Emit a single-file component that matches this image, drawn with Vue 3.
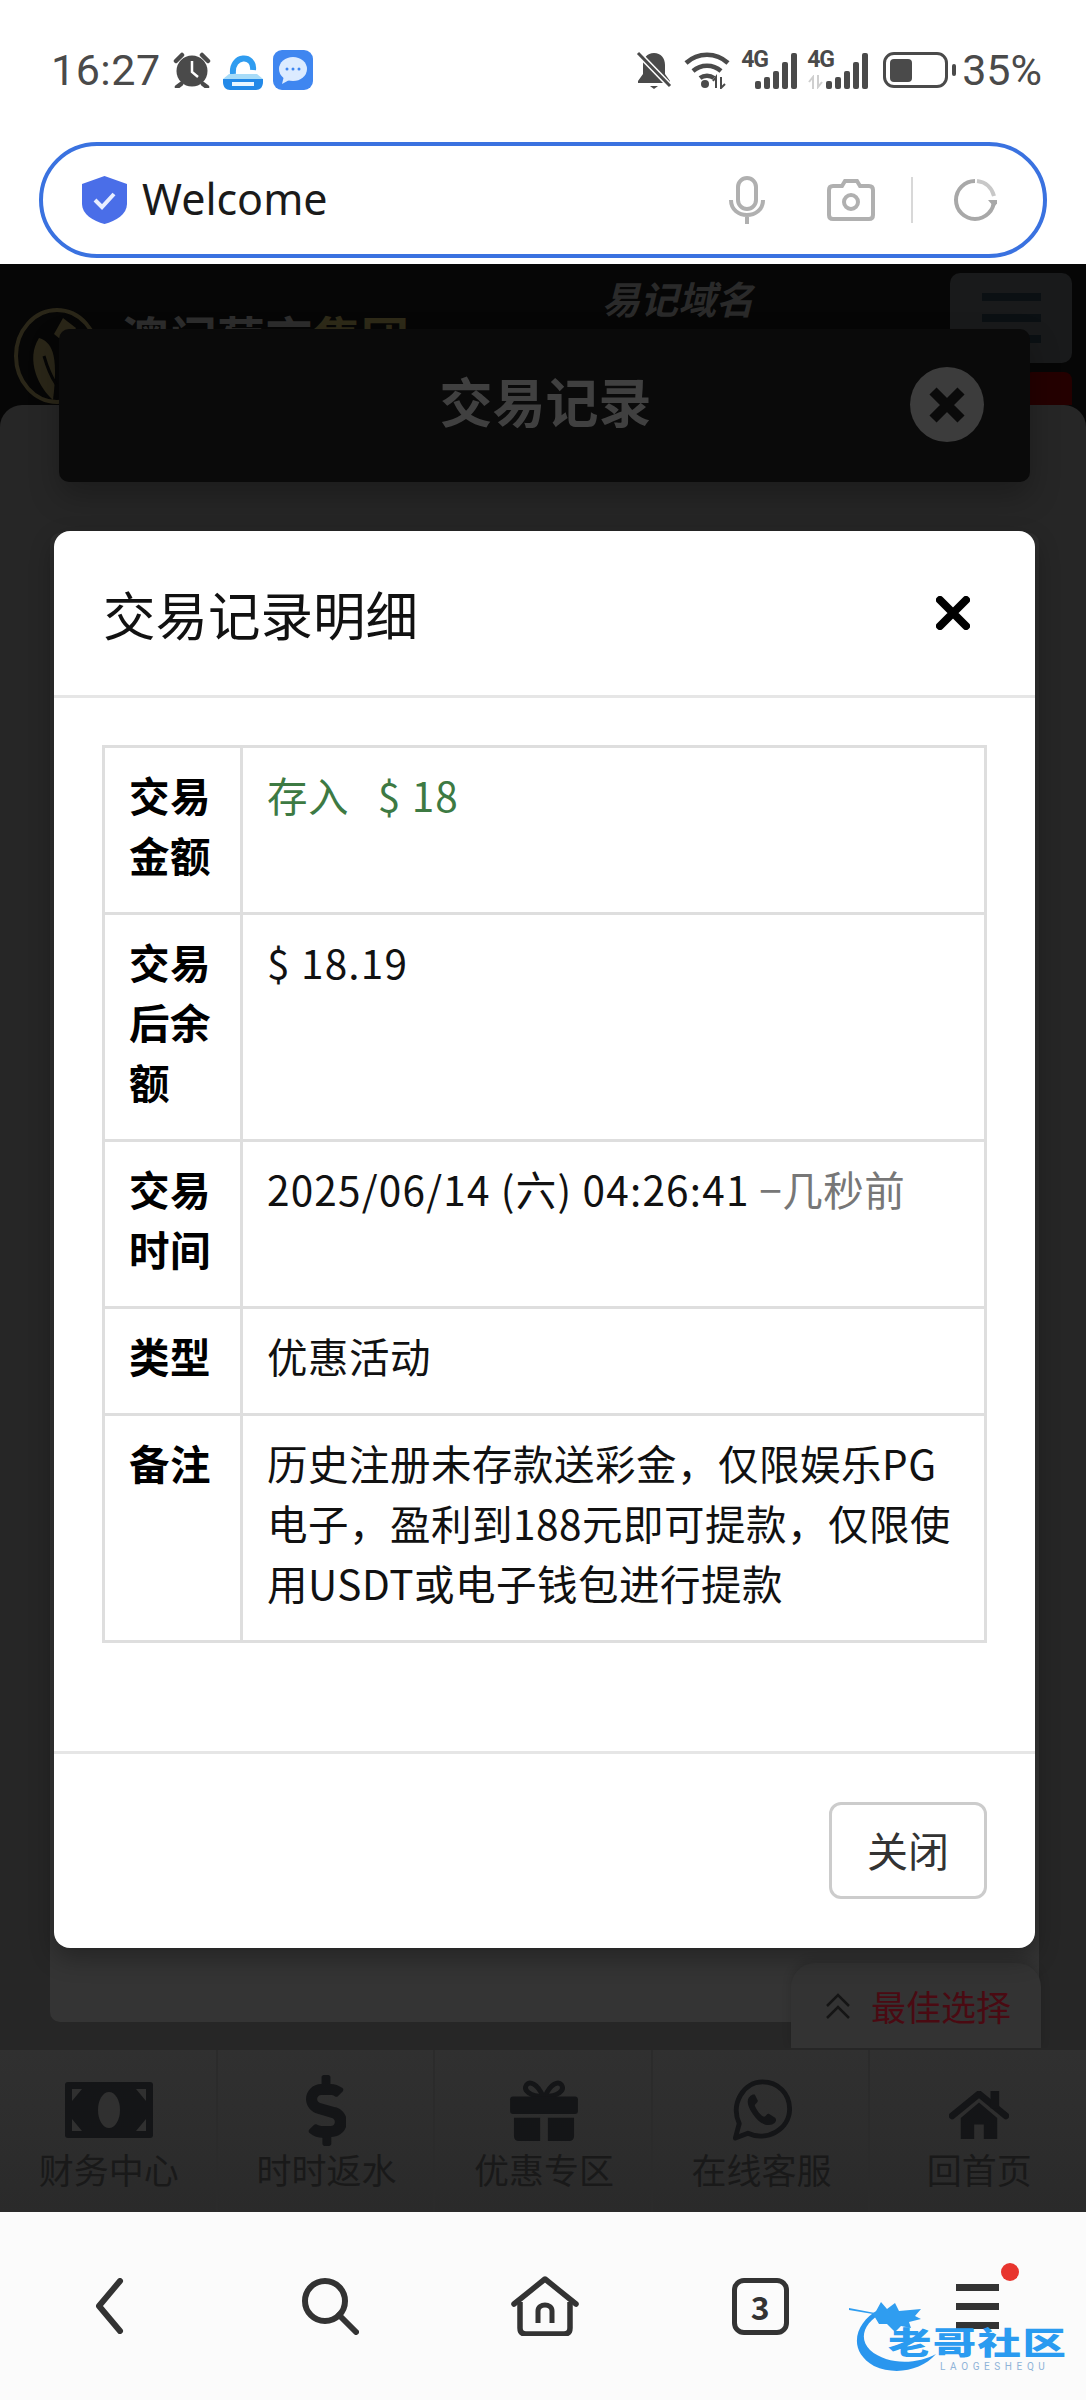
<script setup>
const navItems = [
  { label: '财务中心', icon: 'cash' },
  { label: '时时返水', icon: 'dollar' },
  { label: '优惠专区', icon: 'gift' },
  { label: '在线客服', icon: 'chat' },
  { label: '回首页', icon: 'home' }
]
const signalBars = [8, 12, 18, 27, 36]
</script>

<template>
  <div class="phone">
    <div class="status-bar">
      <span class="time">16:27</span>
      <svg class="st-alarm" viewBox="0 0 38 36" width="38" height="36">
        <circle cx="19" cy="19" r="15.5" fill="#4a4a4a" />
        <path d="M19 9v11l6 5" fill="none" stroke="#fff" stroke-width="2.5" />
        <path d="M3 9 9 3M35 9l-6-6M8 32l-4 3M30 32l4 3" stroke="#4a4a4a" stroke-width="4.5" stroke-linecap="round" />
      </svg>
      <svg class="st-app" viewBox="0 0 40 40" width="40" height="40">
        <path d="M10 24C8 4 32 4 30 20" fill="none" stroke="#2f9cf0" stroke-width="6" />
        <path d="M6 24h28l6 5H0z" fill="#a8dcf8" />
        <path d="M0 29h40v3c0 5-3 8-7 8H7c-4 0-7-3-7-8z" fill="#2389e8" />
        <rect x="9" y="32" width="22" height="4" fill="#e8f5ff" />
      </svg>
      <svg class="st-chat" viewBox="0 0 40 40" width="40" height="40">
        <rect width="40" height="40" rx="9" fill="#3f86f0" />
        <ellipse cx="20" cy="19" rx="14" ry="12" fill="#dcebff" />
        <path d="M11 26l-2 8 9-5z" fill="#dcebff" />
        <circle cx="14" cy="19" r="1.5" fill="#3f86f0" />
        <circle cx="20" cy="19" r="1.5" fill="#3f86f0" />
        <circle cx="26" cy="19" r="1.5" fill="#3f86f0" />
      </svg>
      <div class="status-right">
        <svg viewBox="0 0 38 40" width="38" height="40">
          <path d="M19 3c-7 0-11 5-11 12v9l-5 7v2h32v-2l-5-7v-9c0-7-4-12-11-12z" fill="#4a4a4a" />
          <path d="M15 36h8l-4 3z" fill="#4a4a4a" />
          <path d="M3 3l32 33" stroke="#fff" stroke-width="6" />
          <path d="M3 3l32 33" stroke="#4a4a4a" stroke-width="3" />
        </svg>
        <svg class="st-wifi" viewBox="0 0 48 38" width="48" height="38">
          <path d="M3 12c12-11 30-11 42 0M10 20c8-7 20-7 28 0M17 27c4-3 10-3 14 0" fill="none" stroke="#4a4a4a" stroke-width="4.5" />
          <circle cx="22" cy="33" r="4" fill="#4a4a4a" />
          <path d="M33 37V26l-3 4M38 26v11l4-4" fill="none" stroke="#4a4a4a" stroke-width="2" />
        </svg>
        <div class="signal">
          <span class="g4">4G</span>
          <i v-for="h in signalBars" :key="h" :style="{ height: h + 'px' }"></i>
        </div>
        <div class="signal second">
          <span class="g4">4G</span>
          <svg class="arrows" viewBox="0 0 16 14" width="16" height="14">
            <path d="M5 14V2L1 7M10 0v12l4-5" fill="none" stroke="#cfcfcf" stroke-width="2" />
          </svg>
          <i v-for="h in signalBars" :key="h" :style="{ height: h + 'px' }"></i>
        </div>
        <div class="battery"><div class="level"></div></div>
        <span class="tip"></span>
        <span class="pct">35%</span>
      </div>
    </div>

    <div class="address-wrap">
      <div class="address">
        <svg viewBox="0 0 45 48" width="45" height="48">
          <path d="M22.5 0 45 8v20c0 10-11 17-22.5 20C11 45 0 38 0 28V8z" fill="#4a6ee8" />
          <path d="M13 24l7 7 12-13" fill="none" stroke="#e8eeff" stroke-width="4" />
        </svg>
        <span class="welcome">Welcome</span>
        <svg class="a-mic" viewBox="0 0 36 48" width="36" height="48">
          <rect x="9" y="2" width="18" height="31" rx="9" fill="none" stroke="#b0b0b0" stroke-width="4" />
          <path d="M2 24c0 20 32 20 32 0M18 38v10" fill="none" stroke="#b0b0b0" stroke-width="4" />
        </svg>
        <svg class="a-cam" viewBox="0 0 48 42" width="48" height="42">
          <path d="M15 7l3-5h12l3 5h9c3 0 4 2 4 4v25c0 3-2 4-4 4H6c-3 0-4-2-4-4V11c0-3 2-4 4-4z" fill="none" stroke="#b0b0b0" stroke-width="4" />
          <circle cx="24" cy="23" r="7" fill="none" stroke="#b0b0b0" stroke-width="4" />
        </svg>
        <span class="a-sep"></span>
        <svg class="a-ref" viewBox="0 0 44 44" width="44" height="44">
          <path d="M22 3a19 19 0 1 0 19 19" fill="none" stroke="#a8a8a8" stroke-width="4" />
          <path d="M24 3c9 1 15 7 17 15" fill="none" stroke="#c8c8c8" stroke-width="4" />
          <path d="M35 22h12l-6 7z" fill="#a8a8a8" />
        </svg>
      </div>
    </div>

    <div class="site">
      <header class="site-head">
        <div class="brand">
          <svg viewBox="0 0 88 96" width="88" height="96">
            <ellipse cx="44" cy="48" rx="41" ry="46" fill="none" stroke="#2a2618" stroke-width="4" />
            <path d="M50 10l13 10-10 16-12-10z" fill="#2a2618" />
            <path d="M26 30c12 4 20 14 14 62C26 80 12 52 26 30z" fill="#2a2618" />
            <path d="M31 48c4 14 8 22 12 28" fill="none" stroke="#060606" stroke-width="3" />
          </svg>
          <span class="brand-name">澳门葡京<em>集团</em></span>
        </div>
        <div class="slogan">易记域名</div>
        <div class="head-right">
          <div class="burger"><i></i><i></i><i></i></div>
          <div class="red-chip"></div>
        </div>
      </header>

      <main class="site-body">
        <div class="panel"></div>
        <div class="best-tab">
          <svg viewBox="0 0 26 26" width="26" height="26">
            <path d="M2 13 13 2l11 11M2 25 13 14l11 11" fill="none" stroke="#151515" stroke-width="2.5" />
          </svg>
          <span>最佳选择</span>
        </div>
      </main>

      <nav class="site-nav">
        <div v-for="item in navItems" :key="item.label" class="nav-item">
          <div class="nav-icon">
            <svg v-if="item.icon === 'cash'" viewBox="0 0 88 56" width="88" height="56">
              <rect width="88" height="56" rx="3" fill="#141517" />
              <ellipse cx="44" cy="28" rx="11" ry="18" fill="#303030" />
              <path d="M7 7h10L7 19zM81 7H71l10 12zM7 49h10L7 37zM81 49H71l10-12z" fill="#303030" />
            </svg>
            <svg v-else-if="item.icon === 'dollar'" viewBox="0 0 288 512" width="40" height="71">
              <path fill="#141517" d="M209.2 233.4l-108-31.6C88.7 198.2 80 186.5 80 173.5c0-16.3 13.2-29.5 29.5-29.5h66.3c12.2 0 24.2 3.7 34.2 10.5 6.1 4.1 14.3 3.1 19.5-2l34.8-34c7.1-6.9 6.1-18.4-1.8-24.5C238 74.8 207.4 64.1 176 64V16c0-8.8-7.2-16-16-16h-32c-8.8 0-16 7.2-16 16v48h-2.5C45.8 64-5.4 118.7.5 183.6c4.2 46.1 39.4 83.6 83.8 96.6l102.5 30c12.5 3.7 21.2 15.3 21.2 28.3 0 16.3-13.2 29.5-29.5 29.5h-66.3C100 368 88 364.3 78 357.5c-6.1-4.1-14.3-3.1-19.5 2l-34.8 34c-7.1 6.9-6.1 18.4 1.8 24.5 30.7 24 61.3 34.7 92.7 34.8V496c0 8.8 7.2 16 16 16h32c8.8 0 16-7.2 16-16v-48.2c46.6-.9 90.3-28.6 105.7-72.7 21.5-61.6-14.6-124.8-71.7-141.7z" />
            </svg>
            <svg v-else-if="item.icon === 'gift'" viewBox="0 0 70 64" width="70" height="62">
              <path d="M34 18C28 4 20 2 17 6c-4 6 4 12 17 12zM36 18C42 4 50 2 53 6c4 6-4 12-17 12z" fill="none" stroke="#141517" stroke-width="5" />
              <rect y="18" width="70" height="18" rx="3" fill="#141517" />
              <path d="M4 40h27v24H9c-3 0-5-2-5-5zM39 40h27v19c0 3-2 5-5 5H39z" fill="#141517" />
            </svg>
            <svg v-else-if="item.icon === 'chat'" viewBox="0 0 62 64" width="61" height="62">
              <path d="M4 61 8 46C-1 26 12 3 32 3c16 0 28 12 28 28 0 21-24 34-43 25z" fill="none" stroke="#141517" stroke-width="5" stroke-linejoin="round" />
              <path d="M22 16c-7 3-7 10 0 20 6 9 13 13 20 11 4-2 5-5 3-7l-6-4c-2-1-3 2-5 3-3 0-9-8-10-12 1-2 4-3 3-5l-3-6z" fill="#141517" />
            </svg>
            <svg v-else class="ic-home" viewBox="0 0 62 50" width="60" height="48">
              <path d="M3 26 31 3l28 23" fill="none" stroke="#141517" stroke-width="7" stroke-linecap="round" />
              <rect x="43" y="0" width="9" height="18" fill="#141517" />
              <path d="M12 28 31 12l19 16v22H36V35H26v15H12z" fill="#141517" />
            </svg>
          </div>
          <div class="nav-label">{{ item.label }}</div>
        </div>
      </nav>

      <!-- the two dialogs lying over the page -->
      <div class="records">
        <span class="records-title">交易记录</span>
        <span class="records-close">
          <svg viewBox="0 0 40 40" width="40" height="40">
            <path d="M6 6l28 28M34 6 6 34" stroke="#0a0a0a" stroke-width="10" />
          </svg>
        </span>
      </div>

      <div class="detail">
        <div class="detail-head">
          <h5>交易记录明细</h5>
          <svg viewBox="0 0 34 34" width="34" height="34">
            <path d="M4 4l26 26M30 4 4 30" stroke="#000" stroke-width="8" stroke-linecap="round" />
          </svg>
        </div>
        <div class="detail-body">
          <table>
            <colgroup>
              <col class="col-key" />
              <col />
            </colgroup>
            <tbody>
              <tr>
                <th>交易金额</th>
                <td class="green">存入&nbsp;&nbsp;&nbsp;<span class="num">$ 18</span></td>
              </tr>
              <tr>
                <th>交易后余额</th>
                <td><span class="num">$ 18.19</span></td>
              </tr>
              <tr>
                <th>交易时间</th>
                <td class="date-cell"><span class="num">2025/06/14 (六) 04:26:41</span> <span class="muted">−几秒前</span></td>
              </tr>
              <tr>
                <th>类型</th>
                <td>优惠活动</td>
              </tr>
              <tr>
                <th>备注</th>
                <td>历史注册未存款送彩金，仅限娱乐PG电子，盈利到188元即可提款，仅限使用USDT或电子钱包进行提款</td>
              </tr>
            </tbody>
          </table>
        </div>
        <div class="detail-foot">
          <button class="btn-close">关闭</button>
        </div>
      </div>
    </div>

    <div class="browser-bar">
      <svg viewBox="0 0 30 56" width="30" height="56">
        <path d="M26 3 5 28l21 25" fill="none" stroke="#333" stroke-width="6" stroke-linecap="round" stroke-linejoin="round" />
      </svg>
      <svg class="br-search" viewBox="0 0 58 58" width="58" height="58">
        <circle cx="24" cy="24" r="20" fill="none" stroke="#333" stroke-width="6" />
        <path d="M38 38l17 17" stroke="#333" stroke-width="6" stroke-linecap="round" />
      </svg>
      <svg class="br-home" viewBox="0 0 68 60" width="68" height="60">
        <path d="M3 28 34 3l31 25" fill="none" stroke="#333" stroke-width="5.5" stroke-linecap="round" stroke-linejoin="round" />
        <path d="M9 26v26c0 4 2 6 6 6h38c4 0 6-2 6-6V26" fill="none" stroke="#333" stroke-width="5.5" />
        <path d="M27 47V35c0-8 14-8 14 0v12" fill="none" stroke="#333" stroke-width="5" />
      </svg>
      <div class="tabs-count">3</div>
      <div class="menu-btn"><i></i><i></i><i></i><b></b></div>
    </div>

    <div class="watermark">
      <svg viewBox="0 0 90 74" width="90" height="74">
        <path d="M30 10C8 22-2 50 26 66c22 10 48 4 62-12-18 10-48 12-66-4C10 38 16 22 36 12z" fill="#2a96ee" />
        <path d="M1 8l26 5 6-11 6 7 8-6 4 8 22-2-6 7 6 3-12 3 2 6-10-2-6 6-8-8-8 0-6-10-24-4z" fill="#2f9df0" />
      </svg>
      <span class="wm-cn">老哥社区</span>
      <span class="wm-en">LAOGESHEQU</span>
    </div>
  </div>
</template>

<style scoped>
.phone {
  width: 1086px;
  height: 2400px;
  position: relative;
  overflow: hidden;
  background: #fff;
  font-family: "Noto Sans CJK SC", "Noto Sans", sans-serif;
}

.status-bar {
  height: 140px;
  display: flex;
  align-items: center;
  padding: 0 44px 0 51px;
  box-sizing: border-box;
  color: #4a4a4a;
}
.time {
  font-family: "Roboto", sans-serif;
  font-size: 43px;
  letter-spacing: 0.5px;
  width: 122px;
}
.st-app { margin-left: 12px; }
.st-chat { margin-left: 10px; }
.status-right {
  margin-left: auto;
  display: flex;
  align-items: center;
}
.st-wifi { margin-left: 10px; }
.signal {
  display: flex;
  align-items: flex-end;
  gap: 3px;
  height: 38px;
  margin-left: 10px;
  position: relative;
  width: 56px;
  justify-content: flex-end;
}
.signal.second { margin-left: 10px; width: 61px; }
.signal i { width: 6px; background: #4a4a4a; border-radius: 2px; display: block; }
.g4 {
  position: absolute;
  left: 0;
  top: -3px;
  font-family: "Roboto", sans-serif;
  font-weight: 700;
  font-size: 23px;
  line-height: 24px;
  letter-spacing: -1px;
  color: #4a4a4a;
}
.arrows {
  position: absolute;
  left: 1px;
  bottom: 0;
}
.battery {
  width: 65px;
  height: 36px;
  border: 3.5px solid #4a4a4a;
  border-radius: 11px;
  box-sizing: border-box;
  padding: 3.5px;
  margin-left: 15px;
}
.level { width: 22px; height: 100%; background: #4a4a4a; border-radius: 4px; }
.tip { width: 4px; height: 12px; background: #4a4a4a; border-radius: 2px; margin-left: 4px; }
.pct {
  font-family: "Roboto", sans-serif;
  font-size: 43px;
  margin-left: 6px;
}

.address-wrap { padding: 2px 39px 6px; height: 124px; box-sizing: border-box; }
.address {
  height: 116px;
  border: 4px solid #3a72e0;
  border-radius: 58px;
  box-sizing: border-box;
  display: flex;
  align-items: center;
  padding-left: 39px;
}
.welcome {
  font-family: "Noto Sans", sans-serif;
  font-size: 43px;
  line-height: 56px;
  color: #1a1a1a;
  margin: -2px 0 0 15px;
}
.a-mic { margin-left: auto; }
.a-cam { margin-left: 62px; }
.a-sep { width: 2px; height: 46px; background: #d8d8d8; margin-left: 36px; }
.a-ref { margin-left: 40px; margin-right: 46px; }

.site {
  height: 1948px;
  background: #060606;
  position: relative;
  display: flex;
  flex-direction: column;
}
.site-head {
  height: 141px;
  display: flex;
  overflow: hidden;
}
.brand { display: flex; margin: 44px 0 0 13px; width: 589px; flex-shrink: 0; }
.brand-name {
  font-weight: 700;
  font-size: 48px;
  line-height: 56px;
  color: #2d2d2d;
  margin: 0 0 0 20px;
  height: 56px;
  white-space: nowrap;
}
.brand-name em { font-style: normal; color: #2e2a18; }
.slogan {
  font-weight: 700;
  font-style: italic;
  font-size: 38px;
  line-height: 50px;
  color: #2a2a2a;
  margin-top: 9px;
}
.head-right { margin-left: auto; margin-right: 14px; width: 122px; }
.burger {
  margin-top: 9px;
  height: 90px;
  background: #191a1b;
  border-radius: 10px;
  display: flex;
  flex-direction: column;
  align-items: center;
  justify-content: center;
  gap: 13px;
}
.burger i { width: 59px; height: 8px; background: #0b1013; display: block; }
.red-chip { width: 48px; height: 40px; margin: 9px 0 0 auto; background: #240000; border-radius: 8px 8px 0 0; }

.site-body {
  flex: 1;
  background: #262626;
  border-radius: 22px 22px 0 0;
  padding: 128px 47px 26px 50px;
  display: flex;
  position: relative;
}
.panel {
  flex: 1;
  background: linear-gradient(#2d2d2d, #343434 85%);
  border-radius: 10px;
}
.best-tab {
  position: absolute;
  right: 45px;
  bottom: 0;
  width: 250px;
  height: 85px;
  background: #333;
  border-radius: 24px 24px 0 0;
  box-shadow: 0 -3px 10px rgba(0, 0, 0, 0.14);
  display: flex;
  align-items: center;
  padding-left: 34px;
  box-sizing: border-box;
  font-size: 35px;
  color: #4a0a12;
  gap: 20px;
}

.site-nav {
  height: 164px;
  background: linear-gradient(#303030, #2a2a2a);
  display: flex;
  border-top: 2px solid #262626;
  box-sizing: border-box;
  position: relative;
}
.nav-item {
  flex: 1;
  border-right: 2px solid #2b2b2b;
  padding-left: 2px;
  display: flex;
  flex-direction: column;
  align-items: center;
}
.nav-item:last-child { border-right: none; }
.nav-icon {
  height: 74px;
  display: flex;
  align-items: center;
  justify-content: center;
  margin-top: 23px;
}
.ic-home { margin-top: 10px; }
.nav-label {
  font-size: 35px;
  line-height: 44px;
  color: #191919;
}

.records {
  position: absolute;
  left: 59px;
  top: 65px;
  width: 971px;
  height: 153px;
  background: #0a0a0a;
  border-radius: 10px;
  box-shadow: 0 14px 30px rgba(0, 0, 0, 0.25);
  display: flex;
  align-items: center;
  justify-content: center;
}
.records-title {
  font-weight: 700;
  font-size: 53px;
  color: #404040;
  margin: -12px 0 0 2px;
}
.records-close {
  position: absolute;
  right: 46px;
  top: 38px;
  width: 74px;
  height: 75px;
  border-radius: 50%;
  background: #3c3c3c;
  display: flex;
  align-items: center;
  justify-content: center;
}

.detail {
  position: absolute;
  left: 54px;
  top: 267px;
  width: 981px;
  height: 1417px;
  background: #fff;
  border-radius: 16px;
  box-shadow: 0 10px 24px rgba(0, 0, 0, 0.3);
  display: flex;
  flex-direction: column;
}
.detail-head {
  height: 167px;
  border-bottom: 3px solid #e6e6e6;
  box-sizing: border-box;
  display: flex;
  align-items: center;
  justify-content: space-between;
  padding: 0 65px 0 49px;
}
.detail-head h5 {
  margin: 0;
  font-size: 52.5px;
  font-weight: 400;
  color: #111;
}
.detail-body {
  flex: 1;
  padding: 47px 48px 0;
  box-sizing: border-box;
}
table {
  width: 100%;
  table-layout: fixed;
  border-collapse: collapse;
  font-size: 40.5px;
  line-height: 60px;
  letter-spacing: 0.5px;
  color: #111;
}
.col-key { width: 138px; }
th, td {
  border: 3px solid #dedede;
  padding: 17px 22px 27px 24px;
  vertical-align: top;
  text-align: left;
}
td.date-cell { padding-bottom: 28px; }
th { font-weight: 700; color: #000; }
.num { letter-spacing: 1.2px; }
.green { color: #3d7a43; }
.muted { color: #777; }
.detail-foot {
  height: 197px;
  border-top: 3px solid #e6e6e6;
  box-sizing: border-box;
  padding: 48px 48px 0;
  display: flex;
  justify-content: flex-end;
  align-items: flex-start;
}
.btn-close {
  width: 158px;
  height: 97px;
  background: #fff;
  border: 3px solid #ccc;
  border-radius: 12px;
  font-family: inherit;
  font-size: 41px;
  color: #333;
  padding: 0 0 4px;
}

.browser-bar {
  height: 188px;
  background: #fbfbfb;
  display: grid;
  grid-template-columns: repeat(5, 1fr);
  justify-items: center;
  align-items: center;
}
.br-search { margin-left: 8px; }
.br-home { margin-left: 4px; }
.tabs-count {
  width: 57px;
  height: 57px;
  border: 5px solid #333;
  border-radius: 12px;
  box-sizing: border-box;
  display: flex;
  align-items: center;
  justify-content: center;
  font-weight: 700;
  font-size: 32px;
  color: #333;
}
.menu-btn {
  width: 43px;
  display: flex;
  flex-direction: column;
  gap: 12px;
  position: relative;
}
.menu-btn i { height: 7px; background: #333; display: block; }
.menu-btn b {
  position: absolute;
  right: -20px;
  top: -21px;
  width: 18px;
  height: 18px;
  border-radius: 50%;
  background: #e8352e;
}

.watermark {
  position: absolute;
  left: 848px;
  top: 2300px;
  width: 225px;
  height: 74px;
}
.watermark svg { position: absolute; left: 0; top: 0; }
.wm-cn {
  position: absolute;
  left: 40px;
  top: 25px;
  font-size: 31px;
  line-height: 32px;
  font-weight: 900;
  color: #2a9bf0;
  white-space: nowrap;
  letter-spacing: 1px;
  transform: scaleX(1.4);
  transform-origin: left center;
}
.wm-en {
  position: absolute;
  left: 92px;
  top: 62px;
  font-family: "Roboto", sans-serif;
  font-size: 10px;
  line-height: 10px;
  letter-spacing: 4.6px;
  color: #8fb3d8;
  white-space: nowrap;
}
</style>
